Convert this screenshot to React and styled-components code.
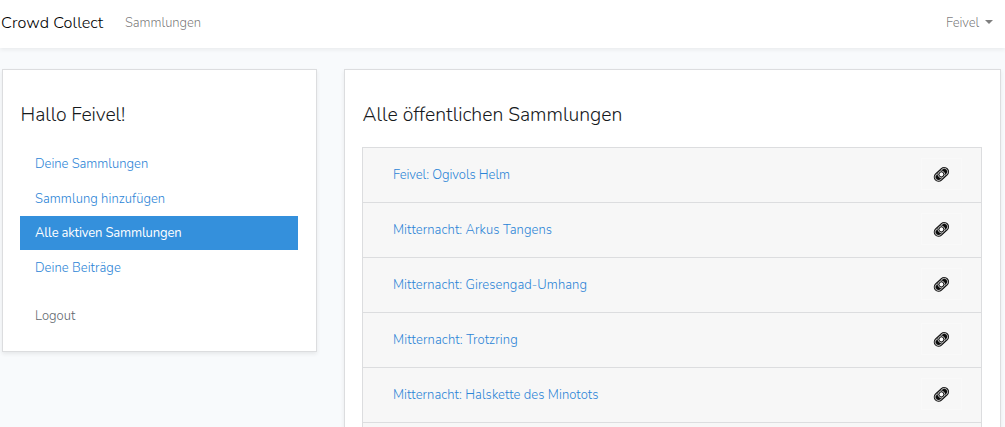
import React from "react";
import styled, { createGlobalStyle } from "styled-components";

const Global = createGlobalStyle`
  * { box-sizing: border-box; }
  body {
    margin: 0; height: 427px; overflow: hidden; background: #f8fafc; color: #212529;
    font-family: Nunito, Lato, "Open Sans", sans-serif; font-size: 13px; line-height: 21px; font-weight: 300;
  }
`;
const Navbar = styled.nav`
  height: 48px; background: #fff; display: flex; align-items: center;
  padding: 0 12px 2px 1px; box-shadow: 0 2px 4px rgba(0,0,0,.06);
  position: relative;
`;
const Label = styled.span`
  white-space: nowrap; letter-spacing: ${p => p.$track || 0}px;
`;
const Brand = styled.a`
  width: 124px; font-size: 16.2px; color: #000; font-weight: 300;
`;
const NavLink = styled.a`color: rgba(0,0,0,.55);`;
const UserMenu = styled.a`
  margin-left: auto; display: flex; align-items: center; gap: 6px; color: rgba(0,0,0,.55);
`;
const Caret = styled.i`
  border: 4px solid transparent; border-top-color: rgba(0,0,0,.5); border-bottom: 0;
  margin-bottom: 2px;
`;
const Main = styled.main`
  display: flex; align-items: flex-start; gap: 27px; padding: 21px 4px 0 2px;
  height: 379px; overflow: hidden;
`;
const Card = styled.section`
  background: #fff; border: 1px solid #dcdddf; box-shadow: 0 2px 4px rgba(0,0,0,.075);
  padding: 33px 18px 0 17px;
  ${p => p.$side ? "width: 315px; height: 283px;" : "flex: 1; height: 358px; border-bottom: 0;"}
`;
const Title = styled.h1`
  margin: 0 0 20px 0.6px; font-size: 19.4px; line-height: 24px; font-weight: 300; color: #16191c;
`;
const Menu = styled.div`display: flex; flex-direction: column;`;
const MenuItem = styled.a`
  height: ${p => p.$active ? 34 : 34.5}px; padding: 7px 15px 0;
  color: ${p => p.$active ? "#fff" : p.$muted ? "#5f676e" : "#2b84d6"};
  background: ${p => p.$active ? "#3490dc" : "none"};
  font-weight: ${p => p.$active ? 400 : 300};
  margin-top: ${p => p.$muted ? "13.5px" : 0};
  ${p => p.$active && "margin-bottom: 1px;"}
`;
const List = styled.div`
  height: 280px; overflow: hidden;
  border: 1px solid #dcdddf; border-bottom: 0; background: #f7f7f7;
`;
const Row = styled.div`
  height: 55px; display: flex; align-items: center; justify-content: space-between;
  padding: 0 19px 0 30px; border-bottom: 1px solid #dcdddf; color: #2b84d6;
`;
const IconTile = styled.span`
  width: 41px; height: 32px; border: 1px solid #f9f9f9; margin-bottom: 2px;
  display: flex; align-items: center; justify-content: center;
`;

const ChainIcon = () => (
  <svg width="17" height="17" viewBox="0 0 17 17" fill="none">
    <g transform="translate(.4 .4) rotate(-43 8 8)">
      <rect x="-.7" y="3.2" width="17.4" height="9.6" rx="4.8" fill="#0c0c0c" />
      <rect x=".8" y="4.7" width="14.4" height="6.6" rx="3.3" stroke="#b0b0b0" strokeWidth="1" />
      <circle cx="8" cy="8" r="4.2" fill="#0c0c0c" />
      <circle cx="8" cy="8" r="3.4" stroke="#c4c4c4" strokeWidth=".9" />
      <circle cx="8" cy="8" r="2" fill="#fff" />
    </g>
  </svg>
);

const menu = [
  { text: "Deine Sammlungen", track: 0 },
  { text: "Sammlung hinzufügen", track: 0.05 },
  { text: "Alle aktiven Sammlungen", track: -0.16, active: true },
  { text: "Deine Beiträge", track: 0.05 },
  { text: "Logout", track: 0.03, muted: true },
];
const rows = [
  { text: "Feivel: Ogivols Helm", track: -0.06 },
  { text: "Mitternacht: Arkus Tangens", track: 0.08 },
  { text: "Mitternacht: Giresengad-Umhang", track: 0.07 },
  { text: "Mitternacht: Trotzring", track: 0.12 },
  { text: "Mitternacht: Halskette des Minotots", track: 0.05 },
];

export default function App() {
  return (
    <>
      <Global />
      <Navbar>
        <Brand><Label $track={0.06}>Crowd Collect</Label></Brand>
        <NavLink><Label $track={-0.05}>Sammlungen</Label></NavLink>
        <UserMenu><Label $track={-0.1}>Feivel</Label><Caret /></UserMenu>
      </Navbar>
      <Main>
        <Card $side>
          <Title><Label $track={-0.08}>Hallo Feivel!</Label></Title>
          <Menu>
            {menu.map(m => (
              <MenuItem key={m.text} $active={m.active} $muted={m.muted}><Label $track={m.track}>{m.text}</Label></MenuItem>
            ))}
          </Menu>
        </Card>
        <Card>
          <Title><Label>Alle öffentlichen Sammlungen</Label></Title>
          <List>
            {rows.map(r => (
              <Row key={r.text}><Label $track={r.track}>{r.text}</Label><IconTile><ChainIcon /></IconTile></Row>
            ))}
          </List>
        </Card>
      </Main>
    </>
  );
}
